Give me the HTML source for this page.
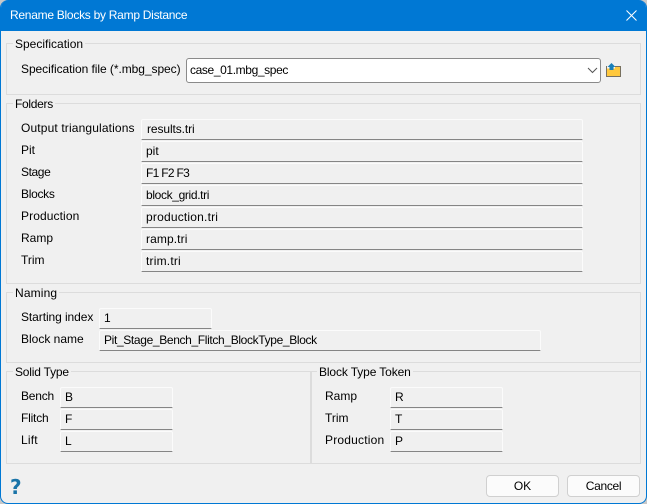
<!DOCTYPE html>
<html><head><meta charset="utf-8"><style>
html,body{margin:0;padding:0;width:647px;height:504px;overflow:hidden;background:#c8c8c8}
#w{position:absolute;left:0;top:0;width:647px;height:504px;box-sizing:border-box;background:#f0f0f0;border:1px solid #0078d4;border-top:0;border-radius:8px 8px 8px 8px;overflow:hidden;font:12px "Liberation Sans",sans-serif;color:#000}
#t{position:absolute;left:-1px;top:0;width:647px;height:31px;background:#0078d4;color:#fff;line-height:31px;text-indent:10px;font-size:12px;letter-spacing:-.27px}
.a{position:absolute;white-space:nowrap;line-height:16px}
.g{position:absolute;box-sizing:border-box;border:1px solid #dcdcdc}
.l{position:absolute;white-space:nowrap;line-height:14px;background:#f0f0f0;padding:0 2px}
.f{position:absolute;box-sizing:border-box;height:21px;background:#f0f0f0;border:1px solid #fbfbfb;border-bottom:1px solid #858585;border-radius:2px 2px 0 0;line-height:19px;padding-left:4px;white-space:nowrap}
.b{position:absolute;box-sizing:border-box;top:475px;width:73px;height:22px;border:1px solid #d0d0d0;border-radius:4px;background:#fbfbfb;text-align:center;line-height:20px}
</style></head><body><div id="w">
<div id="t">Rename Blocks by Ramp Distance</div>
<svg style="position:absolute;left:625px;top:10px" width="11" height="11"><path d="M.5 .5L10.500 10.500M10.500 .5L.5 10.500" stroke="#fff" stroke-width="1" fill="none"/></svg>

<div class="g" style="left:5px;top:43px;width:635px;height:52px"></div><div class="l" style="left:12px;top:37px">Specification</div>
<div class="a" style="left:20px;top:61px;letter-spacing:-.06px">Specification file (*.mbg_spec)</div>
<div style="position:absolute;box-sizing:border-box;left:185px;top:58px;width:415px;height:25px;background:#fff;border:1px solid #8a8a8a;border-radius:3px;line-height:23px;padding-left:3px;letter-spacing:-.38px">case_01.mbg_spec</div>
<svg style="position:absolute;left:586px;top:67px" width="11" height="7"><path d="M1 1L5.500 5.500L10 1" stroke="#555" fill="none"/></svg>
<svg style="position:absolute;left:605px;top:62px" width="16" height="16"><path d="M.5 4.500H14.500V14.500H.5Z" fill="#ffc83d" stroke="#77705f"/><path d="M1 3.500H9V6.500H1Z" fill="#f4f4f4"/><path d="M5.500 1L9.500 5H7.500V8H3.500V5H1.500Z" fill="#1a7fb8"/></svg>

<div class="g" style="left:5px;top:103px;width:635px;height:181px"></div><div class="l" style="left:12px;top:97px;letter-spacing:-.3px">Folders</div>
<div class="a" style="left:20px;top:120px;letter-spacing:.14px">Output triangulations</div><div class="f" style="left:140px;top:119px;width:442px;padding-left:5px;letter-spacing:-.1px">results.tri</div>
<div class="a" style="left:20px;top:142px">Pit</div><div class="f" style="left:140px;top:141px;width:442px">pit</div>
<div class="a" style="left:20px;top:164px;letter-spacing:-.4px">Stage</div><div class="f" style="left:140px;top:163px;width:442px;letter-spacing:-.7px">F1 F2 F3</div>
<div class="a" style="left:20px;top:186px;letter-spacing:-.3px">Blocks</div><div class="f" style="left:140px;top:185px;width:442px;letter-spacing:-.35px">block_grid.tri</div>
<div class="a" style="left:20px;top:208px;letter-spacing:.1px">Production</div><div class="f" style="left:140px;top:207px;width:442px;letter-spacing:.2px">production.tri</div>
<div class="a" style="left:20px;top:230px">Ramp</div><div class="f" style="left:140px;top:229px;width:442px;letter-spacing:.1px">ramp.tri</div>
<div class="a" style="left:20px;top:252px">Trim</div><div class="f" style="left:140px;top:251px;width:442px;letter-spacing:.2px">trim.tri</div>

<div class="g" style="left:5px;top:292px;width:635px;height:71px"></div><div class="l" style="left:12px;top:286px;letter-spacing:.15px">Naming</div>
<div class="a" style="left:20px;top:309px;letter-spacing:-.08px">Starting index</div><div class="f" style="left:98px;top:308px;width:113px">1</div>
<div class="a" style="left:20px;top:331px">Block name</div><div class="f" style="left:98px;top:330px;width:442px;letter-spacing:-.35px">Pit_Stage_Bench_Flitch_BlockType_Block</div>

<div class="g" style="left:5px;top:371px;width:305px;height:93px"></div><div class="l" style="left:12px;top:365px;letter-spacing:-.2px">Solid Type</div>
<div class="a" style="left:20px;top:388px;letter-spacing:-.2px">Bench</div><div class="f" style="left:59px;top:387px;width:113px">B</div>
<div class="a" style="left:20px;top:410px;letter-spacing:-.2px">Flitch</div><div class="f" style="left:59px;top:409px;width:113px">F</div>
<div class="a" style="left:20px;top:432px;letter-spacing:.2px">Lift</div><div class="f" style="left:59px;top:431px;width:113px">L</div>

<div class="g" style="left:310px;top:371px;width:330px;height:93px"></div><div class="l" style="left:316px;top:365px;letter-spacing:-.12px">Block Type Token</div>
<div class="a" style="left:324px;top:388px">Ramp</div><div class="f" style="left:389px;top:387px;width:113px">R</div>
<div class="a" style="left:324px;top:410px">Trim</div><div class="f" style="left:389px;top:409px;width:113px">T</div>
<div class="a" style="left:324px;top:432px;letter-spacing:.2px">Production</div><div class="f" style="left:389px;top:431px;width:113px">P</div>

<div class="a" style="left:9px;top:476px;font:bold 20px/22px 'DejaVu Sans',sans-serif;color:#1a74a8">?</div>
<div class="b" style="left:485px">OK</div>
<div class="b" style="left:566px;letter-spacing:-.3px">Cancel</div>
</div></body></html>
